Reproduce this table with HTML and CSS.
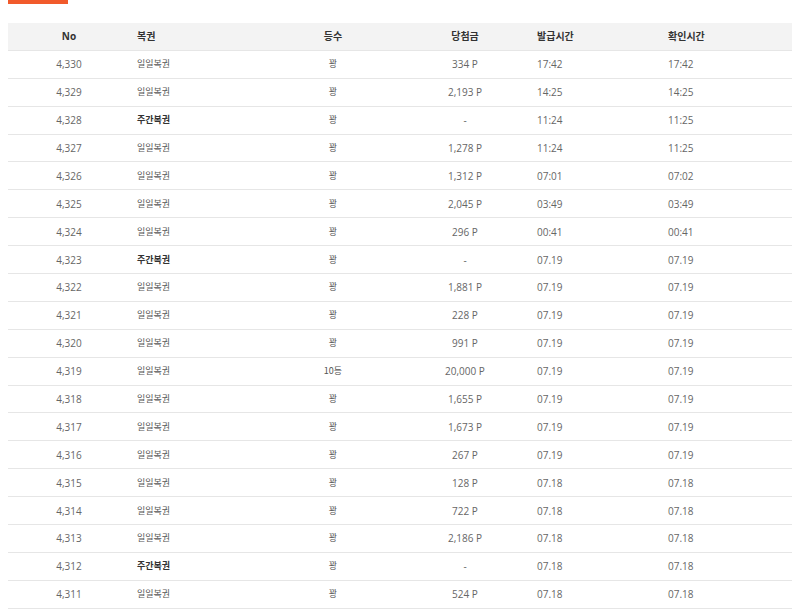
FILE: index.html
```html
<!DOCTYPE html>
<html lang="ko">
<head>
<meta charset="utf-8">
<title>당첨 내역</title>
<link rel="stylesheet" href="styles.css">
</head>
<body>
<div class="page">
  <div class="tab-bar"><span class="tab-active"></span></div>
  <table class="list">
    <colgroup>
      <col class="c-no"><col class="c-type"><col class="c-rank"><col class="c-prize"><col class="c-issue"><col class="c-check">
    </colgroup>
    <thead>
      <tr><th class="center">No</th><th class="left">복권</th><th class="center">등수</th><th class="center">당첨금</th><th class="left">발급시간</th><th class="left">확인시간</th></tr>
    </thead>
    <tbody>
      <tr><td class="center">4,330</td><td class="left ko">일일복권</td><td class="center ko">꽝</td><td class="center">334 P</td><td class="left">17:42</td><td class="left">17:42</td></tr>
      <tr><td class="center">4,329</td><td class="left ko">일일복권</td><td class="center ko">꽝</td><td class="center">2,193 P</td><td class="left">14:25</td><td class="left">14:25</td></tr>
      <tr><td class="center">4,328</td><td class="left ko strong">주간복권</td><td class="center ko">꽝</td><td class="center">-</td><td class="left">11:24</td><td class="left">11:25</td></tr>
      <tr><td class="center">4,327</td><td class="left ko">일일복권</td><td class="center ko">꽝</td><td class="center">1,278 P</td><td class="left">11:24</td><td class="left">11:25</td></tr>
      <tr><td class="center">4,326</td><td class="left ko">일일복권</td><td class="center ko">꽝</td><td class="center">1,312 P</td><td class="left">07:01</td><td class="left">07:02</td></tr>
      <tr><td class="center">4,325</td><td class="left ko">일일복권</td><td class="center ko">꽝</td><td class="center">2,045 P</td><td class="left">03:49</td><td class="left">03:49</td></tr>
      <tr><td class="center">4,324</td><td class="left ko">일일복권</td><td class="center ko">꽝</td><td class="center">296 P</td><td class="left">00:41</td><td class="left">00:41</td></tr>
      <tr><td class="center">4,323</td><td class="left ko strong">주간복권</td><td class="center ko">꽝</td><td class="center">-</td><td class="left">07.19</td><td class="left">07.19</td></tr>
      <tr><td class="center">4,322</td><td class="left ko">일일복권</td><td class="center ko">꽝</td><td class="center">1,881 P</td><td class="left">07.19</td><td class="left">07.19</td></tr>
      <tr><td class="center">4,321</td><td class="left ko">일일복권</td><td class="center ko">꽝</td><td class="center">228 P</td><td class="left">07.19</td><td class="left">07.19</td></tr>
      <tr><td class="center">4,320</td><td class="left ko">일일복권</td><td class="center ko">꽝</td><td class="center">991 P</td><td class="left">07.19</td><td class="left">07.19</td></tr>
      <tr><td class="center">4,319</td><td class="left ko">일일복권</td><td class="center ko">10등</td><td class="center">20,000 P</td><td class="left">07.19</td><td class="left">07.19</td></tr>
      <tr><td class="center">4,318</td><td class="left ko">일일복권</td><td class="center ko">꽝</td><td class="center">1,655 P</td><td class="left">07.19</td><td class="left">07.19</td></tr>
      <tr><td class="center">4,317</td><td class="left ko">일일복권</td><td class="center ko">꽝</td><td class="center">1,673 P</td><td class="left">07.19</td><td class="left">07.19</td></tr>
      <tr><td class="center">4,316</td><td class="left ko">일일복권</td><td class="center ko">꽝</td><td class="center">267 P</td><td class="left">07.19</td><td class="left">07.19</td></tr>
      <tr><td class="center">4,315</td><td class="left ko">일일복권</td><td class="center ko">꽝</td><td class="center">128 P</td><td class="left">07.18</td><td class="left">07.18</td></tr>
      <tr><td class="center">4,314</td><td class="left ko">일일복권</td><td class="center ko">꽝</td><td class="center">722 P</td><td class="left">07.18</td><td class="left">07.18</td></tr>
      <tr><td class="center">4,313</td><td class="left ko">일일복권</td><td class="center ko">꽝</td><td class="center">2,186 P</td><td class="left">07.18</td><td class="left">07.18</td></tr>
      <tr><td class="center">4,312</td><td class="left ko strong">주간복권</td><td class="center ko">꽝</td><td class="center">-</td><td class="left">07.18</td><td class="left">07.18</td></tr>
      <tr><td class="center">4,311</td><td class="left ko">일일복권</td><td class="center ko">꽝</td><td class="center">524 P</td><td class="left">07.18</td><td class="left">07.18</td></tr>
    </tbody>
  </table>
</div>
</body>
</html>
```

FILE: styles.css
```css
html, body {
  margin: 0;
  padding: 0;
  background: #ffffff;
}

body {
  font-family: "Open Sans", "Noto Sans CJK KR", sans-serif;
  font-size: 10px;
  color: #666666;
}

.page {
  padding: 0 8px;
}

.tab-bar {
  display: flex;
  height: 4px;
}

.tab-active {
  width: 60px;
  height: 4px;
  background: #f15a2b;
}

.list {
  margin-top: 19px;
  width: 784px;
  border-collapse: collapse;
  table-layout: fixed;
}

.c-no { width: 122px; }
.c-type { width: 136px; }
.c-rank { width: 134px; }
.c-prize { width: 130px; }
.c-issue { width: 131px; }
.c-check { width: 131px; }

.list th,
.list td {
  height: 26.9px;
  padding: 0 7px;
  border-bottom: 1px solid #e6e6e6;
  line-height: 14px;
  white-space: nowrap;
}

.list th {
  background: #f3f3f3;
  color: #333333;
  font-weight: 700;
}

.list th.left,
.list td.left { text-align: left; }

.list th.center,
.list td.center { text-align: center; }

.list td.ko {
  font-family: "Noto Sans CJK KR", sans-serif;
  font-size: 9px;
  color: #555555;
}

.list td.strong {
  font-weight: 700;
  color: #333333;
}
```
